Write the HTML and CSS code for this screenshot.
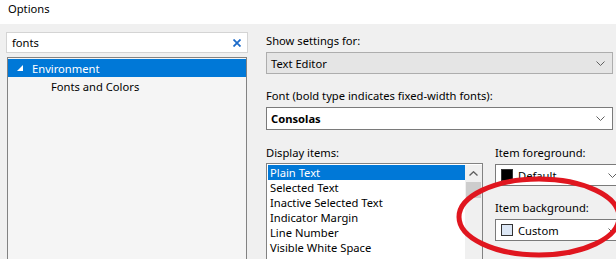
FILE: index.html
```html
<!DOCTYPE html>
<html lang="en">
<head>
  <meta charset="UTF-8" />
  <title>Options</title>
  <link rel="stylesheet" href="styles.css">
</head>
<body>
  <div class="titlebar">Options</div>

  <div class="dialog">
    <!-- left side: search + tree -->
    <div class="left">
      <div class="search">
        <span>fonts</span>
        <svg class="clear" width="8" height="8" viewBox="0 0 8 8">
          <path d="M0.5 0.5 L7.5 7.5 M7.5 0.5 L0.5 7.5" stroke="#1c6bc9" stroke-width="1.8" fill="none"/>
        </svg>
      </div>
      <div class="tree">
        <div class="node selected">
          <svg class="tri" width="6" height="6" viewBox="0 0 6 6">
            <polygon points="6,0 6,6 0,6" fill="#fff"/>
          </svg>
          Environment
        </div>
        <div class="node child">Fonts and Colors</div>
      </div>
    </div>

    <!-- right side: settings -->
    <div class="right">
      <div class="label">Show settings for:</div>
      <div class="combo readonly">
        <span>Text Editor</span>
        <svg class="chev" width="9" height="5" viewBox="0 0 9 5"><polyline points="0.5,0.5 4.5,4.5 8.5,0.5" fill="none" stroke="#606060" stroke-width="1"/></svg>
      </div>

      <div class="label spaced">Font (bold type indicates fixed-width fonts):</div>
      <div class="combo font">
        <span>Consolas</span>
        <svg class="chev" width="9" height="5" viewBox="0 0 9 5"><polyline points="0.5,0.5 4.5,4.5 8.5,0.5" fill="none" stroke="#606060" stroke-width="1"/></svg>
      </div>

      <div class="lower">
        <div class="items">
          <div class="label">Display items:</div>
          <div class="listbox">
            <ul>
              <li class="active">Plain Text</li>
              <li>Selected Text</li>
              <li>Inactive Selected Text</li>
              <li>Indicator Margin</li>
              <li>Line Number</li>
              <li>Visible White Space</li>
              <li>Active Statement</li>
            </ul>
            <div class="scrollbar">
              <div class="sb-btn">
                <svg width="9" height="5" viewBox="0 0 9 5"><polyline points="0.5,4.5 4.5,0.8 8.5,4.5" fill="none" stroke="#606060" stroke-width="1.4"/></svg>
              </div>
              <div class="sb-thumb"></div>
            </div>
          </div>
        </div>

        <div class="colors">
          <div class="label">Item foreground:</div>
          <div class="combo color">
            <span class="swatch black"></span>
            <span>Default</span>
            <svg class="chev" width="9" height="5" viewBox="0 0 9 5"><polyline points="0.5,0.5 4.5,4.5 8.5,0.5" fill="none" stroke="#606060" stroke-width="1"/></svg>
          </div>
          <div class="label spaced">Item background:</div>
          <div class="combo color">
            <span class="swatch light"></span>
            <span>Custom</span>
            <svg class="chev" width="9" height="5" viewBox="0 0 9 5"><polyline points="0.5,0.5 4.5,4.5 8.5,0.5" fill="none" stroke="#606060" stroke-width="1"/></svg>
          </div>
        </div>
      </div>
    </div>
  </div>

  <!-- hand drawn red mark over the dialog -->
  <svg class="markup" width="616" height="259" viewBox="0 0 616 259">
    <ellipse cx="539" cy="217" rx="80" ry="38" fill="none" stroke="#e0161f" stroke-width="5"/>
  </svg>
</body>
</html>
```

FILE: styles.css
```css
/* Windows options dialog look */
body {
  margin: 0;
  width: 616px;
  height: 259px;
  overflow: hidden;
  position: relative;
  background: #f0f0f0;
  color: #000;
  font-family: "Noto Sans", sans-serif;
  font-size: 11.2px;
}
.titlebar {
  height: 24px;
  line-height: 18px;
  padding-left: 8px;
  background: #fff;
  box-sizing: border-box;
}
.dialog {
  display: flex;
  gap: 18px;
  padding-left: 6px;
}
.left {
  width: 242px;
  padding-top: 8px;
}
.search {
  height: 21px;
  box-sizing: border-box;
  border: 1px solid #d4d4d4;
  background: #fff;
  display: flex;
  align-items: center;
  justify-content: space-between;
  padding: 0 6px 0 5px;
}
.tree {
  margin: 4px 1px 0;
  height: 220px;
  border: 1px solid #828282;
  background: #f5f5f5;
  padding-top: 1px;
}
.node {
  height: 18px;
  display: flex;
  align-items: center;
}
.node.selected {
  background: #0078d7;
  color: #fff;
  padding-left: 9px;
}
.tri {
  margin-right: 9px;
}
.node.child {
  padding-left: 43px;
}
.right {
  width: 347px;
  padding-top: 9px;
}
.label {
  line-height: 16px;
  margin-bottom: 3px;
}
.label.spaced {
  margin-top: 14px;
}
.combo {
  height: 22px;
  box-sizing: border-box;
  border: 1px solid #7a7a7a;
  background: #fff;
  display: flex;
  align-items: center;
  padding: 0 4px;
}
.combo .chev {
  margin-left: auto;
  margin-right: 3px;
}
.combo.readonly {
  background: #e5e5e5;
  border-color: #adadad;
}
.combo.font {
  height: 23px;
  font-weight: bold;
}
.lower {
  display: flex;
  gap: 12px;
  margin-top: 15px;
}
.items {
  width: 217px;
}
.items .label {
  margin-bottom: 2px;
}
.listbox {
  height: 110px;
  border: 1px solid #828282;
  background: #fff;
  padding: 1px 0 0 1px;
  display: flex;
}
.listbox ul {
  list-style: none;
  margin: 0;
  padding: 0;
  width: 197px;
}
.listbox li {
  height: 15px;
  line-height: 15px;
  padding-left: 2px;
  white-space: nowrap;
}
.listbox li.active {
  background: #0078d7;
  color: #fff;
}
.scrollbar {
  width: 17px;
  background: #f0f0f0;
}
.sb-btn {
  height: 17px;
  display: flex;
  align-items: center;
  justify-content: center;
}
.sb-thumb {
  margin: 0 1px;
  height: 16px;
  background: #cdcdcd;
}
.colors {
  width: 130px;
  flex-shrink: 0;
}
.combo.color {
  padding-left: 5px;
}
.swatch {
  width: 12px;
  height: 12px;
  box-sizing: border-box;
  border: 1px solid #333;
  margin-right: 5px;
}
.swatch.black {
  background: #000;
}
.swatch.light {
  background: #dce7f5;
}
.markup {
  position: absolute;
  top: 0;
  left: 0;
  pointer-events: none;
}
```
